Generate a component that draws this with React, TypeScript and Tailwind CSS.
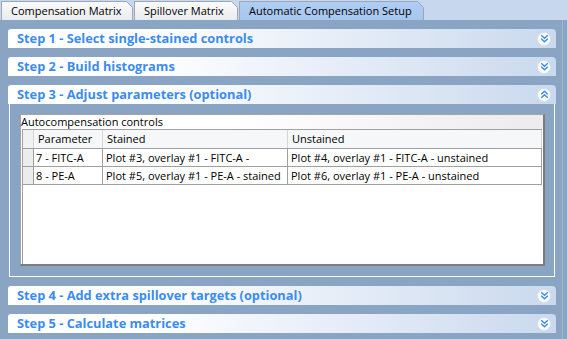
import React from "react";

const FONT = { fontFamily: '"Open Sans", "Noto Sans", sans-serif' };

function Chevrons({ up }: { up?: boolean }) {
  return (
    <div className="w-[14px] h-[14px] rounded-full bg-white border border-[#d3e0ef] flex items-center justify-center">
      <svg width="9" height="9" viewBox="0 0 9 9" className={up ? "rotate-180" : ""}>
        <path
          d="M1.2 1.2 L4.5 4.2 L7.8 1.2 M1.2 4.8 L4.5 7.8 L7.8 4.8"
          fill="none"
          stroke="#3a8cf2"
          strokeWidth="1.5"
        />
      </svg>
    </div>
  );
}

function StepHeader({ title, up }: { title: string; up?: boolean }) {
  return (
    <div className="h-[19px] shrink-0 flex items-center justify-between pl-[9px] pr-[5px] rounded-tl-[3px] rounded-tr-[4px] bg-linear-to-r from-white from-25% to-[#cad9ee]">
      <span className="text-[12.8px] font-bold leading-none text-[#3a8cf2]">{title}</span>
      <Chevrons up={up} />
    </div>
  );
}

function Tab({ label, w, active }: { label: string; w: number; active?: boolean }) {
  const h = 19;
  const fillId = active ? "tabActive" : "tabIdle";
  return (
    <div className="relative h-[19px] shrink-0" style={{ width: w }}>
      <svg className="absolute inset-0" width={w} height={h}>
        <defs>
          <linearGradient id="tabIdle" x1="0" y1="0" x2="0" y2="1">
            <stop offset="0" stopColor="#fbfbfb" />
            <stop offset="1" stopColor="#e9ebee" />
          </linearGradient>
          <linearGradient id="tabActive" x1="0" y1="0" x2="0" y2="1">
            <stop offset="0" stopColor="#b0cdf2" />
            <stop offset="1" stopColor="#a6c6ef" />
          </linearGradient>
        </defs>
        <path
          d={`M0.5 ${h} V0.5 H${w - 6.5} L${w - 0.5} 6.5 V${h}`}
          fill={`url(#${fillId})`}
          stroke="#9ba7b8"
          strokeWidth="1"
        />
      </svg>
      <span className="relative block pl-[10px] pt-[2px] text-[11px] leading-[15px] text-black whitespace-nowrap">
        {label}
      </span>
    </div>
  );
}

const rows = [
  ["7 - FITC-A", "Plot #3, overlay #1 - FITC-A -", "Plot #4, overlay #1 - FITC-A - unstained"],
  ["8 - PE-A", "Plot #5, overlay #1 - PE-A - stained", "Plot #6, overlay #1 - PE-A - unstained"],
];

export default function App() {
  return (
    <div className="w-[567px] h-[339px] flex flex-col bg-[#8aa4c4] overflow-hidden" style={FONT}>
      {/* tab strip */}
      <div className="h-[20px] shrink-0 bg-[#c7d8ee] flex items-start pt-[1px] pl-[1px] gap-[1px]">
        <Tab label="Compensation Matrix" w={132} />
        <Tab label="Spillover Matrix" w={104} />
        <Tab label="Automatic Compensation Setup" w={185} active />
      </div>

      {/* body */}
      <div className="flex-1 flex flex-row">
        <div className="flex-1 flex flex-col pl-[8px] pt-[9px] gap-[9px]">
          <StepHeader title="Step 1 - Select single-stained controls" />
          <StepHeader title="Step 2 - Build histograms" />
          <div className="flex flex-col">
            <StepHeader title="Step 3 - Adjust parameters (optional)" up />
            <div className="h-[173px] mx-[1px] border border-t-0 border-white pt-[10px] pl-[10px] pr-[9px] pb-[10px]">
              <div className="h-full bg-white border-l border-t border-[#a4a4a4] border-r-2 border-b-2 border-r-[#7c7c7c] border-b-[#7c7c7c] flex flex-col">
                <div className="h-[14px] shrink-0 text-[11px] leading-[14px] text-black bg-linear-to-r from-white from-40% to-[#ececec]">
                  Autocompensation controls
                </div>
                <div className="ml-[1px] mr-[1px] flex-1 border-l border-t border-[#a0a0a0] flex flex-col text-[11px] text-black">
                  <div className="h-[19px] flex bg-[#f6f7f9] border-b border-[#a0a0a0]">
                    <div className="w-[11px] shrink-0 border-r border-[#d6d6d6] bg-[#f1f1f1]" />
                    <div className="w-[69px] shrink-0 border-r border-[#d6d6d6] pl-[4px] leading-[18px]">Parameter</div>
                    <div className="w-[185px] shrink-0 border-r border-[#d6d6d6] pl-[4px] leading-[18px]">Stained</div>
                    <div className="flex-1 border-r border-[#d6d6d6] pl-[4px] leading-[18px]">Unstained</div>
                  </div>
                  {rows.map((r, i) => (
                    <div key={i} className="h-[18px] flex border-b border-[#a0a0a0]">
                      <div className="w-[11px] shrink-0 border-r border-[#a0a0a0] bg-[#ececec]" />
                      <div className="w-[69px] shrink-0 border-r border-[#a0a0a0] pl-[2px] leading-[17px] whitespace-nowrap">{r[0]}</div>
                      <div className="w-[185px] shrink-0 border-r border-[#a0a0a0] pl-[3px] leading-[17px] whitespace-nowrap">{r[1]}</div>
                      <div className="flex-1 border-r border-[#a0a0a0] pl-[3px] leading-[17px] whitespace-nowrap">{r[2]}</div>
                    </div>
                  ))}
                </div>
              </div>
            </div>
          </div>
          <StepHeader title="Step 4 - Add extra spillover targets (optional)" />
          <StepHeader title="Step 5 - Calculate matrices" />
        </div>
        <div className="w-[6px] shrink-0" />
        <div className="w-[1px] shrink-0 bg-[#a2b6cf]" />
        <div className="w-[4px] shrink-0" />
      </div>
    </div>
  );
}
